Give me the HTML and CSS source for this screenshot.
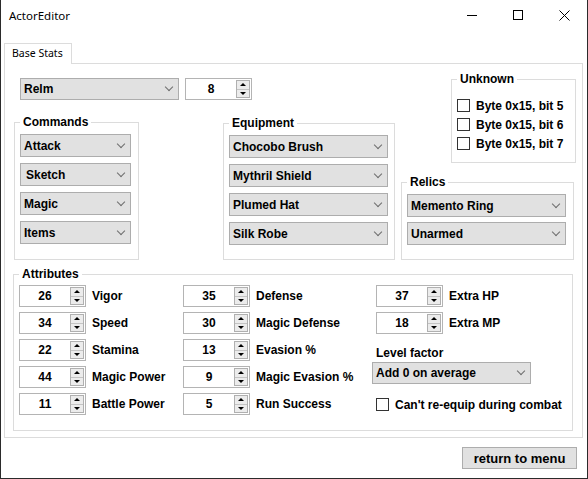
FILE: index.html
```html
<!DOCTYPE HTML>
<html lang="en">
<head>
<meta charset="UTF-8">
<title>ActorEditor</title>
<link rel="stylesheet" href="styles.css">
</head>
<body>
<div class="window">
  <div class="titlebar">
    <span class="title">ActorEditor</span>
    <div class="controls">
      <span class="ctl"><i class="icoMin"></i></span>
      <span class="ctl"><i class="icoMax"></i></span>
      <span class="ctl">
        <svg width="11" height="11" viewBox="0 0 11 11"><path d="M0.5 0.5 L10.5 10.5 M10.5 0.5 L0.5 10.5" stroke="#000" stroke-width="1" fill="none"/></svg>
      </span>
    </div>
  </div>

  <div class="tabstrip"><span class="tab">Base Stats</span></div>

  <div class="tabpage">
    <div class="top">
      <div class="leftcol">
        <div class="pickrow">
          <div class="combo wRelm">Relm</div>
          <div class="spin"><span class="val">8</span><span class="arrows"><i class="up"></i><i class="down"></i></span></div>
        </div>
        <div class="groups">
          <fieldset class="box commands">
            <legend>Commands</legend>
            <div class="combo wCmd">Attack</div>
            <div class="combo wCmd nudge">Sketch</div>
            <div class="combo wCmd">Magic</div>
            <div class="combo wCmd">Items</div>
          </fieldset>
          <fieldset class="box equipment">
            <legend>Equipment</legend>
            <div class="combo wWide">Chocobo Brush</div>
            <div class="combo wWide">Mythril Shield</div>
            <div class="combo wWide">Plumed Hat</div>
            <div class="combo wWide">Silk Robe</div>
          </fieldset>
        </div>
      </div>
      <div class="rightcol">
        <fieldset class="box unknown">
          <legend>Unknown</legend>
          <label class="check"><i class="cb"></i>Byte 0x15, bit 5</label>
          <label class="check"><i class="cb"></i>Byte 0x15, bit 6</label>
          <label class="check"><i class="cb"></i>Byte 0x15, bit 7</label>
        </fieldset>
        <fieldset class="box relics">
          <legend>Relics</legend>
          <div class="combo wWide">Memento Ring</div>
          <div class="combo wWide">Unarmed</div>
        </fieldset>
      </div>
    </div>

    <fieldset class="box attributes">
      <legend>Attributes</legend>
      <div class="attrgrid">
        <div class="col">
          <div class="row"><div class="spin"><span class="val">26</span><span class="arrows"><i class="up"></i><i class="down"></i></span></div><span class="lbl">Vigor</span></div>
          <div class="row"><div class="spin"><span class="val">34</span><span class="arrows"><i class="up"></i><i class="down"></i></span></div><span class="lbl">Speed</span></div>
          <div class="row"><div class="spin"><span class="val">22</span><span class="arrows"><i class="up"></i><i class="down"></i></span></div><span class="lbl">Stamina</span></div>
          <div class="row"><div class="spin"><span class="val">44</span><span class="arrows"><i class="up"></i><i class="down"></i></span></div><span class="lbl">Magic Power</span></div>
          <div class="row"><div class="spin"><span class="val">11</span><span class="arrows"><i class="up"></i><i class="down"></i></span></div><span class="lbl">Battle Power</span></div>
        </div>
        <div class="col">
          <div class="row"><div class="spin"><span class="val">35</span><span class="arrows"><i class="up"></i><i class="down"></i></span></div><span class="lbl">Defense</span></div>
          <div class="row"><div class="spin"><span class="val">30</span><span class="arrows"><i class="up"></i><i class="down"></i></span></div><span class="lbl">Magic Defense</span></div>
          <div class="row"><div class="spin"><span class="val">13</span><span class="arrows"><i class="up"></i><i class="down"></i></span></div><span class="lbl">Evasion %</span></div>
          <div class="row"><div class="spin"><span class="val">9</span><span class="arrows"><i class="up"></i><i class="down"></i></span></div><span class="lbl">Magic Evasion %</span></div>
          <div class="row"><div class="spin"><span class="val">5</span><span class="arrows"><i class="up"></i><i class="down"></i></span></div><span class="lbl">Run Success</span></div>
        </div>
        <div class="col">
          <div class="row"><div class="spin"><span class="val">37</span><span class="arrows"><i class="up"></i><i class="down"></i></span></div><span class="lbl">Extra HP</span></div>
          <div class="row"><div class="spin"><span class="val">18</span><span class="arrows"><i class="up"></i><i class="down"></i></span></div><span class="lbl">Extra MP</span></div>
          <div class="lvl">Level factor</div>
          <div class="combo wLvl">Add 0 on average</div>
          <label class="check reequip"><i class="cb"></i>Can't re-equip during combat</label>
        </div>
      </div>
    </fieldset>
  </div>

  <div class="footer"><button class="btn">return to menu</button></div>
</div>
</body>
</html>
```

FILE: styles.css
```css
* { margin: 0; padding: 0; box-sizing: border-box; }
body {
  width: 588px;
  height: 479px;
  overflow: hidden;
  background: #fff;
  color: #000;
  font: bold 12px "Liberation Sans", Arial, sans-serif;
}
i { display: block; }

.window {
  width: 588px;
  height: 479px;
  display: flex;
  flex-direction: column;
  border: 1px solid #2b2b2b;
  border-top: none;
}

/* title bar */
.titlebar {
  height: 30px;
  display: flex;
  align-items: center;
  padding-left: 8px;
}
.title { font: normal 11.5px "Noto Sans", sans-serif; }
.controls { display: flex; margin-left: auto; height: 30px; }
.ctl {
  width: 46px;
  height: 30px;
  display: flex;
  align-items: center;
  justify-content: center;
}
.icoMin { width: 10px; height: 1px; background: #000; }
.icoMax { width: 10px; height: 10px; border: 1px solid #000; }

/* tab */
.tabstrip { margin-top: 13px; padding-left: 3px; display: flex; }
.tab {
  position: relative;
  z-index: 1;
  width: 68px;
  height: 21px;
  margin-bottom: -1px;
  padding-left: 7px;
  border: 1px solid #dcdcdc;
  border-bottom: none;
  background: #fff;
  font: normal 10.5px/19px "Noto Sans", sans-serif;
}
.tabpage {
  width: 579px;
  height: 375px;
  margin-left: 3px;
  border: 1px solid #dcdcdc;
}

/* group boxes */
.box {
  border: 1px solid #dcdcdc;
  min-width: 0;
}
.box legend {
  padding: 0 3px;
  line-height: 14px;
}

.top { display: flex; }
.pickrow { display: flex; gap: 6px; margin: 14px 0 0 15px; }
.groups { display: flex; gap: 84px; margin: 15px 0 0 9px; }
.commands { width: 125px; padding: 5px 0 15px 5px; }
.equipment { width: 172px; padding: 5px 0 14px 5px; margin-top: 1px; }
.commands .combo, .equipment .combo { margin-bottom: 6px; }
.commands .combo:last-of-type, .equipment .combo:last-of-type { margin-bottom: 0; }

.rightcol {
  margin-left: auto;
  display: flex;
  flex-direction: column;
  align-items: flex-end;
}
.unknown { width: 125px; margin: 8px 6px 0 0; padding: 10px 0 9px 5px; }
.relics { width: 173px; margin: 12px 8px 0 0; padding: 5px 0 14px 5px; }
.relics .combo + .combo { margin-top: 5px; }

/* combo box */
.combo {
  display: flex;
  align-items: center;
  height: 23px;
  padding-left: 3px;
  background: #e1e1e1;
  border: 1px solid #adadad;
  white-space: pre;
}
.combo::after {
  content: "";
  width: 5px;
  height: 5px;
  margin: -4px 6px 0 auto;
  border-right: 1px solid #6d6d6d;
  border-bottom: 1px solid #6d6d6d;
  transform: rotate(45deg);
}
.combo.nudge { padding-left: 5px; }
.wRelm { width: 159px; height: 22px; }
.wCmd { width: 111px; }
.wWide { width: 159px; }
.wLvl { width: 159px; height: 22px; margin: -3px 0 0 -4px; }

/* spinner */
.spin {
  display: flex;
  width: 67px;
  height: 22px;
  padding: 1px 1px 1px 0;
  border: 1px solid #b4b4b4;
  background: #fff;
}
.spin .val { flex: 1; text-align: center; line-height: 18px; }
.arrows {
  width: 14px;
  display: flex;
  flex-direction: column;
  border: 1px solid #b0b0b0;
  background: #ececec;
}
.arrows i {
  flex: 1;
  display: flex;
  align-items: center;
  justify-content: center;
}
.arrows .up { border-bottom: 1px solid #c4c4c4; }
.arrows i::before {
  content: "";
  border-left: 3px solid transparent;
  border-right: 3px solid transparent;
}
.arrows .up::before { border-bottom: 3px solid #000; }
.arrows .down::before { border-top: 3px solid #000; }

/* check boxes */
.check { display: flex; align-items: center; height: 19px; gap: 6px; }
.cb { width: 13px; height: 13px; border: 1px solid #333; background: #fff; }

/* attributes */
.attributes { width: 560px; margin: 7px 0 0 8px; padding: 4px 0 15px 5px; }
.attrgrid { display: grid; grid-template-columns: 164px 193px 1fr; }
.col { display: flex; flex-direction: column; gap: 5px; }
.row { display: flex; align-items: center; gap: 6px; }
.lvl { line-height: 14px; margin-top: 7px; }
.reequip { margin-top: 6px; }

/* footer */
.footer { display: flex; justify-content: flex-end; padding: 9px 10px 0 0; }
.btn {
  width: 115px;
  height: 22px;
  background: #e1e1e1;
  border: 1px solid #adadad;
  font: bold 13px "Liberation Sans", Arial, sans-serif;
  color: #000;
}
```
